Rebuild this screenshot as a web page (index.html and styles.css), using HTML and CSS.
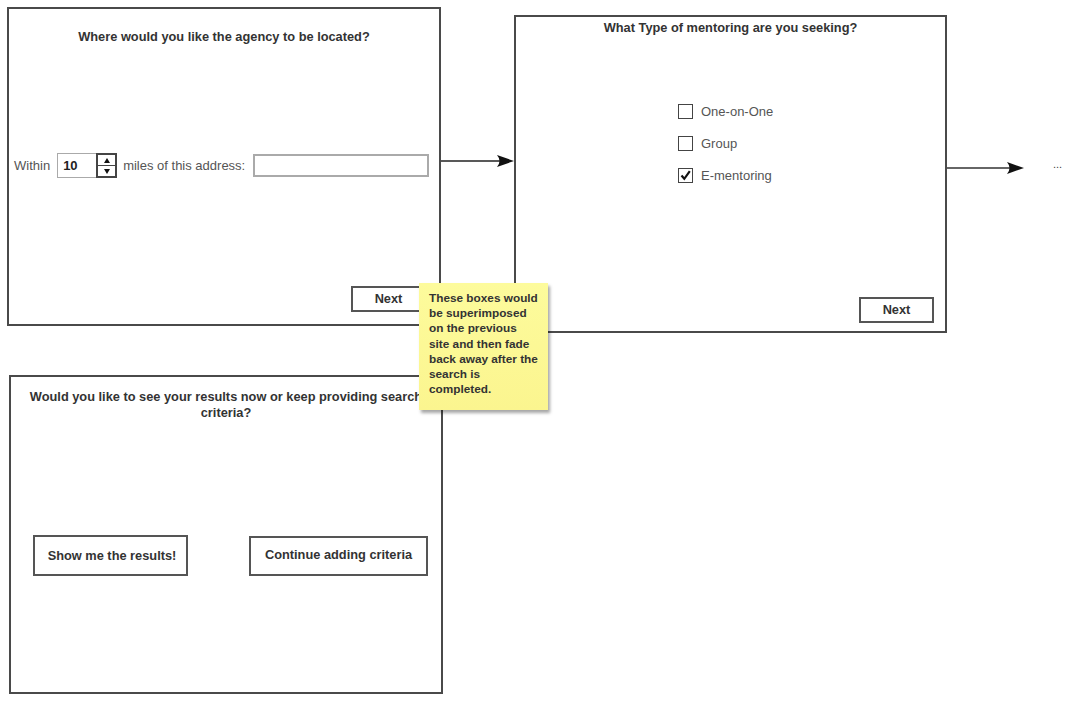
FILE: index.html
```html
<!DOCTYPE html>
<html lang="en">
<head>
    <meta charset="UTF-8">
    <meta name="viewport" content="width=device-width, initial-scale=1.0">
    <link rel="stylesheet" href="styles.css">
</head>
<body>
    <div class="canvas">
        <svg class="connectors" width="1078" height="711" viewBox="0 0 1078 711">
            <line x1="441" y1="161" x2="503" y2="161" stroke="#222" stroke-width="1.5"/>
            <path d="M514 161 L497 155 Q502 161 497 167 Z" fill="#111"/>
            <line x1="947" y1="168" x2="1013" y2="168" stroke="#333" stroke-width="1.5"/>
            <path d="M1024 168 L1007 162 Q1012 168 1007 174 Z" fill="#111"/>
        </svg>
        <span class="more">...</span>

        <div class="frame frame-location">
            <p class="frame-title">Where would you like the agency to be located?</p>
            <div class="frame-body">
                <div class="distance-row">
                    <span>Within</span>
                    <div class="spinner">
                        <span class="spinner-value">10</span>
                        <div class="spinner-btns">
                            <span class="tri-up"></span>
                            <span class="tri-down"></span>
                        </div>
                    </div>
                    <span>miles of this address:</span>
                    <div class="text-input"></div>
                </div>
            </div>
            <div class="frame-footer">
                <div class="btn btn-next">Next</div>
            </div>
        </div>

        <div class="frame frame-type">
            <p class="frame-title">What Type of mentoring are you seeking?</p>
            <div class="frame-body">
                <ul class="check-list">
                    <li><span class="checkbox"></span>One-on-One</li>
                    <li><span class="checkbox"></span>Group</li>
                    <li>
                        <span class="checkbox">
                            <svg width="11" height="11" viewBox="0 0 11 11"><path d="M1.5 5.5 L4.3 8.8 L9.8 1.2" fill="none" stroke="#111" stroke-width="2.2"/></svg>
                        </span>E-mentoring
                    </li>
                </ul>
            </div>
            <div class="frame-footer">
                <div class="btn btn-next">Next</div>
            </div>
        </div>

        <div class="frame frame-results">
            <p class="frame-title">Would you like to see your results now or keep providing search criteria?</p>
            <div class="choice-row">
                <div class="btn btn-show">Show me the results!</div>
                <div class="btn btn-continue">Continue adding criteria</div>
            </div>
        </div>

        <div class="sticky-note">
            These boxes would<br>
            be superimposed<br>
            on the previous<br>
            site and then fade<br>
            back away after the<br>
            search is<br>
            completed.
        </div>
    </div>
</body>
</html>
```

FILE: styles.css
```css
body {
    margin: 0;
    background: #fff;
    font-family: 'Liberation Sans', Arial, sans-serif;
    color: #333;
}

.canvas {
    position: relative;
    width: 1078px;
    height: 711px;
    overflow: hidden;
}

.connectors {
    position: absolute;
    left: 0;
    top: 0;
}

.more {
    position: absolute;
    left: 1053px;
    top: 158px;
    font-size: 11px;
    color: #444;
}

/* wireframe boxes */
.frame {
    position: absolute;
    box-sizing: border-box;
    display: flex;
    flex-direction: column;
    border: 2px solid #4a4a4a;
    background: #fff;
}

.frame-location {
    left: 7px;
    top: 7px;
    width: 434px;
    height: 319px;
}

.frame-type {
    left: 514px;
    top: 15px;
    width: 433px;
    height: 318px;
}

.frame-results {
    left: 9px;
    top: 375px;
    width: 434px;
    height: 319px;
}

.frame-title {
    margin: 0;
    font-size: 12.8px;
    font-weight: bold;
    line-height: 16px;
    text-align: center;
}

.frame-location .frame-title {
    padding-top: 20px;
}

.frame-type .frame-title {
    padding-top: 3px;
}

.frame-results .frame-title {
    padding: 12px 8px 0;
}

.frame-body {
    flex: 1;
    display: flex;
    align-items: center;
}

.frame-footer {
    display: flex;
    justify-content: flex-end;
}

.btn {
    box-sizing: border-box;
    display: flex;
    align-items: center;
    justify-content: center;
    border: 2px solid #555;
    background: #fff;
    font-size: 12.8px;
    font-weight: bold;
    color: #333;
}

.btn-next {
    width: 75px;
    height: 26px;
    padding-bottom: 1px;
}

.frame-location .frame-footer {
    padding: 0 13px 12px 0;
}

.frame-type .frame-footer {
    padding: 0 11px 8px 0;
}

/* distance row */
.distance-row {
    display: flex;
    align-items: center;
    padding-left: 5px;
    font-size: 13px;
    color: #555;
}

.spinner {
    display: flex;
    height: 25px;
    margin: 0 6px 0 7px;
}

.spinner-value {
    box-sizing: border-box;
    width: 39px;
    padding-left: 5px;
    display: flex;
    align-items: center;
    border: 1px solid #aaa;
    border-right: none;
    font-weight: bold;
    color: #222;
}

.spinner-btns {
    box-sizing: border-box;
    width: 21px;
    display: flex;
    flex-direction: column;
    border: 2px solid #444;
}

.spinner-btns span {
    flex: 1;
    display: flex;
    align-items: center;
    justify-content: center;
}

.tri-up {
    border-bottom: 1px solid #444;
}

.tri-up::after,
.tri-down::after {
    content: "";
    border-left: 3px solid transparent;
    border-right: 3px solid transparent;
}

.tri-up::after {
    border-bottom: 5px solid #111;
}

.tri-down::after {
    border-top: 5px solid #111;
}

.text-input {
    box-sizing: border-box;
    width: 176px;
    height: 23px;
    margin-left: 8px;
    border: 2px solid #aaa;
}

/* checkboxes */
.check-list {
    list-style: none;
    margin: 0 0 46px 162px;
    padding: 0;
    display: flex;
    flex-direction: column;
    gap: 17px;
    font-size: 13px;
    color: #555;
}

.check-list li {
    display: flex;
    align-items: center;
    height: 15px;
}

.checkbox {
    box-sizing: border-box;
    width: 15px;
    height: 15px;
    margin-right: 8px;
    border: 1.5px solid #444;
    display: flex;
    align-items: center;
    justify-content: center;
}

/* results choice */
.choice-row {
    display: flex;
    justify-content: space-between;
    align-items: center;
    margin-top: 114px;
    padding: 0 13px 0 22px;
}

.btn-show {
    width: 155px;
    height: 41px;
    padding-left: 3px;
}

.btn-continue {
    width: 179px;
    height: 40px;
    padding-bottom: 2px;
}

/* note */
.sticky-note {
    position: absolute;
    left: 419px;
    top: 283px;
    box-sizing: border-box;
    width: 129px;
    height: 127px;
    padding: 8px 0 0 10px;
    background: linear-gradient(#fdfb9c, #fbf58f);
    box-shadow: 2px 3px 3px rgba(0, 0, 0, 0.35);
    font-size: 11.8px;
    font-weight: bold;
    line-height: 15.2px;
    color: #333;
}
```
